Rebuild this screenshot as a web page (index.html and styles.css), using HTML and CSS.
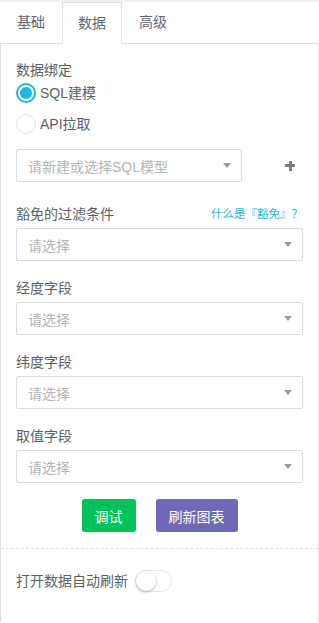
FILE: index.html
```html
<!DOCTYPE html>
<html lang="zh">
<head>
<meta charset="utf-8">
<link rel="stylesheet" href="styles.css">
</head>
<body>
<div class="strip"></div>
<div class="tabs">
  <div class="tab">基础</div>
  <div class="tab active">数据</div>
  <div class="tab">高级</div>
</div>
<div class="panel">
  <div class="label">数据绑定</div>
  <div class="radios">
    <div class="radio-row"><span class="radio checked"></span><span>SQL建模</span></div>
    <div class="radio-row"><span class="radio"></span><span>API拉取</span></div>
  </div>
  <div class="model-row">
    <div class="select model"><span>请新建或选择SQL模型</span><i class="caret"></i></div>
    <span class="plus"></span>
  </div>
  <div class="field first">
    <div class="label-row"><span class="label">豁免的过滤条件</span><a class="link">什么是『豁免』？</a></div>
    <div class="select"><span>请选择</span><i class="caret"></i></div>
  </div>
  <div class="field">
    <div class="label">经度字段</div>
    <div class="select"><span>请选择</span><i class="caret"></i></div>
  </div>
  <div class="field">
    <div class="label">纬度字段</div>
    <div class="select"><span>请选择</span><i class="caret"></i></div>
  </div>
  <div class="field">
    <div class="label">取值字段</div>
    <div class="select"><span>请选择</span><i class="caret"></i></div>
  </div>
  <div class="buttons">
    <button class="btn green">调试</button>
    <button class="btn purple">刷新图表</button>
  </div>
  <div class="divider"></div>
  <div class="toggle-row">
    <span class="label">打开数据自动刷新</span>
    <span class="switch"><span class="knob"></span></span>
  </div>
</div>
</body>
</html>
```
FILE: styles.css
```css
* { box-sizing: border-box; }
html, body { margin: 0; padding: 0; background: #fff; }
body {
  width: 319px;
  height: 623px;
  overflow: hidden;
  font-family: "Liberation Sans", "Noto Sans CJK SC", sans-serif;
  font-size: 14px;
  color: #5a5f64;
}
.strip { height: 2px; background: #eef1f1; }
.tabs {
  display: flex;
  height: 42px;
  border-bottom: 1px solid #dde3e3;
}
.tab {
  padding: 0 17px;
  line-height: 40px;
  color: #60666b;
}
.tab.active {
  border: 1px solid #dde3e3;
  border-bottom: 1px solid #fff;
  margin-bottom: -1px;
  height: 42px;
  padding: 0 15px;
}
.panel {
  border-left: 1px solid #dde3e3;
  border-right: 1px solid #dde3e3;
  height: 578px;
  padding: 16px 0 0;
}
.panel > .label, .radios, .model-row, .field, .buttons, .toggle-row {
  margin-left: 15px;
  margin-right: 15px;
}
.label { line-height: 20px; display: block; }
.radios {
  margin-top: 3px;
  display: flex;
  flex-direction: column;
  gap: 11px;
}
.radio-row {
  display: flex;
  align-items: center;
  gap: 4px;
  height: 20px;
  line-height: 20px;
}
.radio {
  width: 20px;
  height: 20px;
  border-radius: 50%;
  border: 1px solid #dde2e2;
  display: flex;
  align-items: center;
  justify-content: center;
}
.radio.checked { border: 2px solid #1cb6e2; }
.radio.checked::after {
  content: "";
  width: 12px;
  height: 12px;
  border-radius: 50%;
  background: #1cb6e2;
}
.model-row {
  margin-top: 15px;
  display: flex;
  align-items: center;
}
.select {
  height: 33px;
  border: 1px solid #d4dede;
  border-radius: 2px;
  display: flex;
  align-items: center;
  justify-content: space-between;
  padding: 0 10px 0 11px;
  color: #b2b5b7;
}
.select.model { width: 226px; }
.caret {
  width: 0;
  height: 0;
  border-left: 4.5px solid transparent;
  border-right: 4.5px solid transparent;
  border-top: 5px solid #9a9d9f;
}
.plus {
  margin-left: 43px;
  width: 10px;
  height: 10px;
  background:
    linear-gradient(#7a7d80, #7a7d80) center / 10px 3px no-repeat,
    linear-gradient(#7a7d80, #7a7d80) center / 3px 10px no-repeat;
}
.field { margin-top: 17px; }
.field.first { margin-top: 22px; }
.field .label { margin-bottom: 4px; }
.label-row {
  display: flex;
  justify-content: space-between;
  align-items: center;
  margin-bottom: 4px;
}
.label-row .label { margin-bottom: 0; }
.link { color: #1ab8e0; font-size: 11.5px; line-height: 20px; }
.buttons {
  margin-top: 16px;
  display: flex;
  justify-content: center;
  gap: 20px;
}
.btn {
  border: none;
  border-radius: 3px;
  height: 33px;
  color: #fff;
  font-family: inherit;
  font-size: 14px;
  padding: 0;
}
.btn.green { background: #00c25a; width: 54px; }
.btn.purple { background: #6f68b6; width: 82px; }
.divider {
  margin-top: 16px;
  border-top: 1px dashed #dde1e1;
}
.toggle-row {
  margin-top: 21px;
  display: flex;
  align-items: center;
  gap: 7px;
}
.switch {
  width: 37px;
  height: 22px;
  border-radius: 11px;
  border: 1px solid #e6e8e8;
  background: #fff;
  position: relative;
}
.knob {
  position: absolute;
  left: 0;
  top: 0;
  width: 20px;
  height: 20px;
  border-radius: 50%;
  background: #fff;
  box-shadow: 0 1px 3px rgba(0,0,0,0.3);
}
```
